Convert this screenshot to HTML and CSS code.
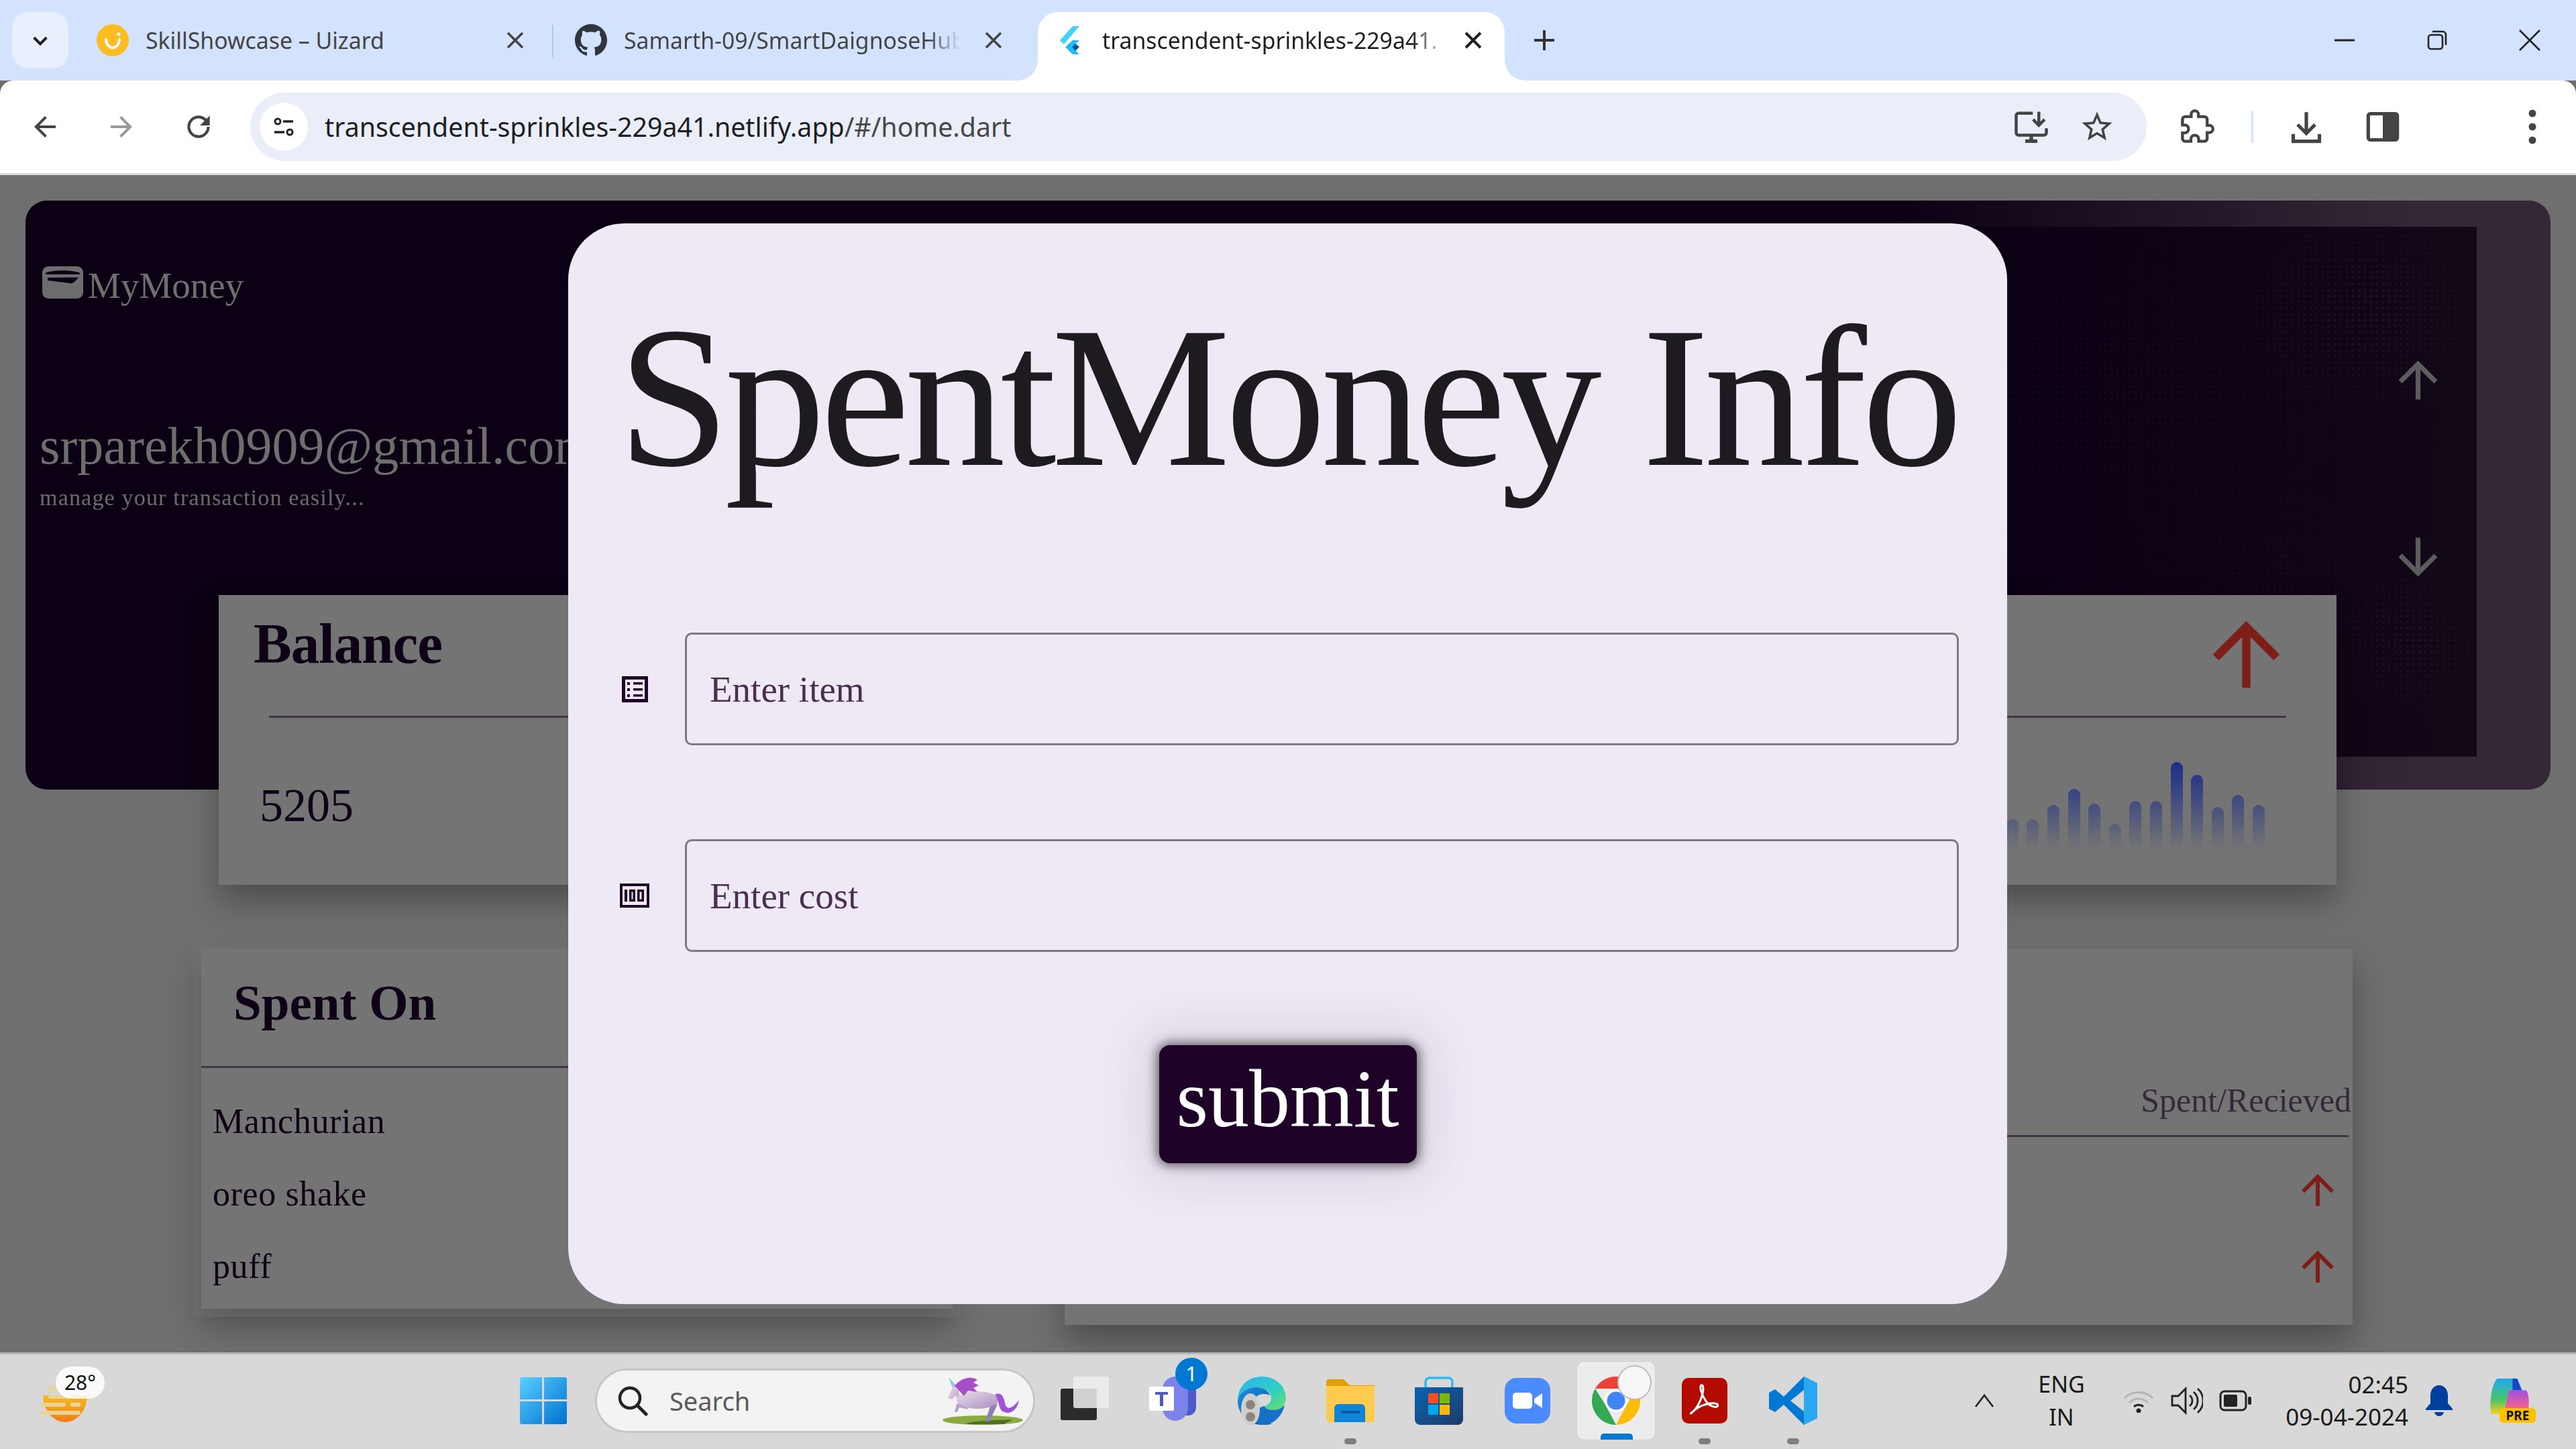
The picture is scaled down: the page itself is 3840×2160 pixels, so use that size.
FILE: index.html
```html
<!DOCTYPE html>
<html lang="en">
<head>
<meta charset="utf-8">
<title>transcendent-sprinkles-229a41</title>
<link rel="stylesheet" href="styles.css">
</head>
<body>
<div class="screen">
  <header class="tabstrip">
    <div class="tabsearch"><svg viewBox="0 0 24 24" class="ic24"><path d="M5 9l7 7 7-7" fill="none" stroke="#1f1f1f" stroke-width="3"/></svg></div>
    <div class="tab tab-first">
      <svg class="favicon" viewBox="0 0 48 48"><circle cx="24" cy="24" r="24" fill="#fdbd22"/><path d="M14 23c1 16 19 16 20 0" fill="none" stroke="#fff" stroke-width="4" stroke-linecap="round"/><circle cx="33" cy="15" r="2.5" fill="#fff"/></svg>
      <span class="tab-title">SkillShowcase – Uizard</span>
      <svg class="tab-close" viewBox="0 0 48 48"><path d="M13 13l22 22M35 13L13 35" stroke="#444" stroke-width="3.5"/></svg>
    </div>
    <div class="tab-sep"></div>
    <div class="tab tab-second">
      <svg class="favicon" viewBox="0 0 16 16"><path fill="#2f3640" d="M8 0C3.58 0 0 3.58 0 8c0 3.54 2.29 6.53 5.47 7.59.4.07.55-.17.55-.38 0-.19-.01-.82-.01-1.49-2.01.37-2.53-.49-2.69-.94-.09-.23-.48-.94-.82-1.13-.28-.15-.68-.52-.01-.53.63-.01 1.08.58 1.23.82.72 1.21 1.87.87 2.33.66.07-.52.28-.87.51-1.07-1.78-.2-3.64-.89-3.64-3.95 0-.87.31-1.59.82-2.15-.08-.2-.36-1.02.08-2.12 0 0 .67-.21 2.2.82.64-.18 1.32-.27 2-.27.68 0 1.36.09 2 .27 1.53-1.04 2.2-.82 2.2-.82.44 1.1.16 1.92.08 2.12.51.56.82 1.27.82 2.15 0 3.07-1.87 3.75-3.65 3.95.29.25.54.73.54 1.48 0 1.07-.01 1.93-.01 2.2 0 .21.15.46.55.38A8.013 8.013 0 0016 8c0-4.42-3.58-8-8-8z"/></svg>
      <span class="tab-title tab-fade">Samarth-09/SmartDaignoseHub</span>
      <svg class="tab-close" viewBox="0 0 48 48"><path d="M13 13l22 22M35 13L13 35" stroke="#444" stroke-width="3.5"/></svg>
    </div>
    <div class="tab tab-active">
      <svg class="favicon" viewBox="0 0 48 48"><path d="M20 3L1 24l6 6L30 3z" fill="#44d1fd"/><path d="M20 24L9 34l11 11h10L19 34l11-10z" fill="#1fbcfd"/><path d="M19 34l5-5 6 5-6 6z" fill="#08589c"/></svg>
      <span class="tab-title tab-fade tab-title-active">transcendent-sprinkles-229a41.</span>
      <svg class="tab-close" viewBox="0 0 48 48"><path d="M13 13l22 22M35 13L13 35" stroke="#1f1f1f" stroke-width="4"/></svg>
    </div>
    <svg class="newtab" viewBox="0 0 48 48"><path d="M24 9v30M9 24h30" stroke="#333" stroke-width="4"/></svg>
    <div class="winctl">
      <div class="winbtn"><svg viewBox="0 0 32 32" class="ic32"><path d="M1 16h30" stroke="#222" stroke-width="3"/></svg></div>
      <div class="winbtn"><svg viewBox="0 0 32 32" class="ic32"><rect x="3" y="8" width="21" height="21" rx="4" fill="none" stroke="#222" stroke-width="2.6"/><path d="M9 3h15a5 5 0 015 5v15" fill="none" stroke="#222" stroke-width="2.6"/></svg></div>
      <div class="winbtn"><svg viewBox="0 0 32 32" class="ic32"><path d="M1 1l30 30M31 1L1 31" stroke="#222" stroke-width="2.6"/></svg></div>
    </div>
  </header>

  <nav class="toolbar">
    <svg class="navicon" viewBox="0 0 24 24"><path fill="#444" d="M20 11H7.83l5.59-5.59L12 4l-8 8 8 8 1.41-1.41L7.83 13H20z"/></svg>
    <svg class="navicon navicon-off" viewBox="0 0 24 24"><path fill="#9a9a9a" d="M4 11h12.17l-5.59-5.59L12 4l8 8-8 8-1.41-1.41L16.17 13H4z"/></svg>
    <svg class="navicon" viewBox="0 0 24 24"><path fill="#444" d="M17.65 6.35A7.96 7.96 0 0012 4a8 8 0 108 8h-2a6 6 0 11-1.76-4.24L13 11h7V4z"/></svg>
    <div class="omnibox">
      <div class="siteinfo"><svg viewBox="0 0 36 36" class="ic36"><circle cx="9" cy="10" r="4" fill="none" stroke="#222" stroke-width="3"/><path d="M17 10h15M4 26h15" stroke="#222" stroke-width="3.4"/><circle cx="27" cy="26" r="4" fill="none" stroke="#222" stroke-width="3"/></svg></div>
      <span class="url">transcendent-sprinkles-229a41.netlify.app<span class="url-dim">/#/home.dart</span></span>
      <svg class="omni-ic" viewBox="0 0 24 24"><path d="M13 3H3.5A1.5 1.5 0 002 4.500V16a1.500 1.500 0 001.500 1.500h17A1.500 1.500 0 0022 16v-3" fill="none" stroke="#444" stroke-width="2"/><path d="M8 21.500h8M12 18v3" stroke="#444" stroke-width="2.400"/><path d="M17 2v9m-3.800-3.800L17 11l3.800-3.800" fill="none" stroke="#444" stroke-width="2"/></svg>
      <svg class="omni-ic" viewBox="0 0 24 24"><path fill="#444" d="M22 9.240l-7.190-.620L12 2 9.190 8.630 2 9.240l5.460 4.730L5.820 21 12 17.270 18.180 21l-1.630-7.030L22 9.240zM12 15.400l-3.760 2.270 1-4.280-3.320-2.880 4.380-.380L12 6.100l1.710 4.040 4.380.380-3.320 2.880 1 4.280L12 15.400z"/></svg>
    </div>
    <svg class="tool-ic tool-ext" viewBox="0 0 24 24"><path fill="none" stroke="#444" stroke-width="2" d="M20.500 11H19V7c0-1.100-.900-2-2-2h-4V3.500C13 2.120 11.880 1 10.500 1S8 2.120 8 3.500V5H4c-1.100 0-1.990.900-1.990 2v3.800H3.500c1.490 0 2.700 1.210 2.700 2.700s-1.210 2.700-2.700 2.700H2V20c0 1.100.900 2 2 2h3.800v-1.500c0-1.490 1.210-2.700 2.700-2.700 1.490 0 2.700 1.210 2.700 2.700V22H17c1.100 0 2-.900 2-2v-4h1.500c1.380 0 2.500-1.120 2.500-2.500S21.880 11 20.500 11z"/></svg>
    <div class="tool-sep"></div>
    <svg class="tool-ic tool-dl" viewBox="0 0 24 24"><path d="M12 2v14M6 10.500l6 6 6-6M3 17v5h18v-5" fill="none" stroke="#444" stroke-width="2.400"/></svg>
    <svg class="tool-ic tool-side" viewBox="0 0 24 24"><rect x="2" y="3" width="20" height="18" rx="1.500" fill="none" stroke="#444" stroke-width="2.400"/><rect x="12" y="3" width="10" height="18" fill="#444"/></svg>
    <svg class="tool-ic tool-menu" viewBox="0 0 24 24"><circle cx="12" cy="4" r="2.200" fill="#444"/><circle cx="12" cy="12" r="2.200" fill="#444"/><circle cx="12" cy="20" r="2.200" fill="#444"/></svg>
  </nav>

  <main class="page">
    <section class="hero">
      <div class="hero-copy">
        <div class="brand">
          <svg class="brand-ic" viewBox="0 0 61 48"><rect width="61" height="48" rx="9" fill="#6d6d6d"/><path d="M5 10c10-5 41-5 51 0v2H5z" fill="#0c0014"/><path d="M8 17l46-.500c-3 4-7 8-10 9L8 21z" fill="#0c0014"/></svg>
          <span class="brand-name">MyMoney</span>
        </div>
        <div class="email">srparekh0909@gmail.com</div>
        <div class="tagline">manage your transaction easily...</div>
      </div>
      <div class="hero-art">
        <div class="dots"></div>
        <svg class="hero-arrow" viewBox="0 0 24 24"><path fill="#5c5c5c" d="M4 12l1.410 1.410L11 7.830V20h2V7.830l5.580 5.590L20 12l-8-8-8 8z"/></svg>
        <svg class="hero-arrow" viewBox="0 0 24 24"><path fill="#5c5c5c" d="M20 12l-1.410-1.410L13 16.170V4h-2v12.170l-5.580-5.590L4 12l8 8 8-8z"/></svg>
      </div>
    </section>

    <section class="balance card">
      <div class="balance-head">
        <h2 class="balance-title">Balance</h2>
        <svg class="big-arrow" viewBox="0 0 24 24"><path fill="#7c1f18" d="M4 12l1.410 1.410L11 7.830V20h2V7.830l5.580 5.590L20 12l-8-8-8 8z"/></svg>
      </div>
      <div class="rule balance-rule"></div>
      <div class="balance-body">
        <div class="balance-value">5205</div>
        <div class="chart">
          <i class="bar" style="height:44px"></i><i class="bar" style="height:44px"></i><i class="bar" style="height:65px"></i><i class="bar" style="height:89px"></i><i class="bar" style="height:67px"></i><i class="bar" style="height:37px"></i><i class="bar" style="height:71px"></i><i class="bar" style="height:71px"></i><i class="bar" style="height:129px"></i><i class="bar" style="height:110px"></i><i class="bar" style="height:62px"></i><i class="bar" style="height:80px"></i><i class="bar" style="height:65px"></i>
        </div>
      </div>
    </section>

    <div class="lists">
      <section class="spent card">
        <h2 class="spent-title">Spent On</h2>
        <div class="rule spent-rule"></div>
        <ul class="items">
          <li>Manchurian</li>
          <li>oreo shake</li>
          <li>puff</li>
        </ul>
      </section>
      <section class="flow card">
        <div class="flow-head">Spent/Recieved</div>
        <div class="rule flow-rule"></div>
        <div class="flow-arrows">
          <svg class="small-arrow" viewBox="0 0 24 24"><path fill="#7c1f18" d="M4 12l1.410 1.410L11 7.830V20h2V7.830l5.580 5.590L20 12l-8-8-8 8z"/></svg>
          <svg class="small-arrow" viewBox="0 0 24 24"><path fill="#7c1f18" d="M4 12l1.410 1.410L11 7.830V20h2V7.830l5.580 5.590L20 12l-8-8-8 8z"/></svg>
        </div>
      </section>
    </div>

    <div class="modal">
      <h1 class="modal-title">SpentMoney Info</h1>
      <div class="field-row">
        <div class="field-ic"><svg class="ic-list" viewBox="0 0 39 39"><path fill="#1e0227" fill-rule="evenodd" d="M1 0h37a1 1 0 011 1v37a1 1 0 01-1 1H1a1 1 0 01-1-1V1a1 1 0 011-1zm4 5v29h29V5z"/><path fill="#1e0227" d="M8 9h4v4H8zM8 18h4v4H8zM8 27h4v4H8zM17 9h14v3.500H17zM17 18h14v3.500H17zM17 27h14v3.500H17z"/></svg></div>
        <div class="field">Enter item</div>
      </div>
      <div class="field-row field-row-next">
        <div class="field-ic"><svg class="ic-money" viewBox="0 0 44 36"><path fill="#1e0227" fill-rule="evenodd" d="M0 0h44v36H0zm4 4v28h36V4z"/><path fill="#1e0227" fill-rule="evenodd" d="M7 9h4v18H7zM14 9h9v18h-9zm3.500 3.500v11h2v-11zM26 9h10v18H26zm3.500 3.500v11h3v-11z"/></svg></div>
        <div class="field">Enter cost</div>
      </div>
      <div class="submit">submit</div>
    </div>
  </main>

  <footer class="taskbar">
    <div class="weather">
      <svg class="weather-ic" viewBox="0 0 80 76"><defs><linearGradient id="sun" x1="0" y1="0" x2="0" y2="1"><stop offset="0" stop-color="#f9b928"/><stop offset="1" stop-color="#f07d12"/></linearGradient></defs><path d="M8 30h66a33 40 0 01-66 0z" fill="url(#sun)"/><g fill="#e8d596"><rect x="16" y="17" width="16" height="6" rx="2"/><rect x="16" y="29" width="33" height="6" rx="2"/><rect x="4" y="41" width="38" height="6" rx="3"/><rect x="49" y="41" width="15" height="6" rx="2"/><rect x="4" y="53" width="60" height="6" rx="3"/></g></svg>
      <span class="temp">28°</span>
    </div>
    <div class="tile tile-win">
      <svg class="ic-win" viewBox="0 0 70 70"><defs><linearGradient id="win" x1="0" y1="0" x2="1" y2="1"><stop offset="0" stop-color="#5ad0ff"/><stop offset="1" stop-color="#0070d0"/></linearGradient></defs><path fill="url(#win)" d="M3 0h30v33H0V3a3 3 0 013-3zM36 0h31a3 3 0 013 3v30H36zM0 36h33v34H3a3 3 0 01-3-3zM36 36h34v31a3 3 0 01-3 3H36z"/></svg>
    </div>
    <div class="searchbox">
      <svg class="ic-search" viewBox="0 0 46 46"><circle cx="19" cy="19" r="15" fill="none" stroke="#222" stroke-width="4.500"/><path d="M30 30l13 13" stroke="#222" stroke-width="5" stroke-linecap="round"/></svg>
      <span class="search-label">Search</span>
      <svg class="ic-unicorn" viewBox="0 0 128 74"><defs><linearGradient id="uni" x1="0" y1="0" x2="1" y2="1"><stop offset="0" stop-color="#ecdde8"/><stop offset="1" stop-color="#a98fc4"/></linearGradient></defs><ellipse cx="66" cy="66" rx="60" ry="7" fill="#8aab3f"/><path d="M40 71c20-5 50-5 70-6l-12 7H46z" fill="#4f6d25"/><path d="M15 2l6 17 6-4z" fill="#8ecbe0"/><path d="M78 42L70 68h6l12-26z" fill="#8f7fb8"/><path d="M40 42H27l-3 12h4l3-7 13 3z" fill="#b6a2cc"/><path d="M36 42c-3-6-5-12-6-20l-8-7-8 18 6 2 6-6 4 14z" fill="url(#uni)"/><ellipse cx="58" cy="36" rx="31" ry="13" fill="url(#uni)"/><path d="M84 28c12-6 14 8 16 16 4 8 12 2 20-8-2 14-12 22-22 18-10-4-6-16-14-26z" fill="#9d54d6"/><path d="M24 15C34 2 50 0 58 6l-6 4 8 4-8 4 6 6-14-2-6 8z" fill="#a64fc9"/></svg>
    </div>
    <div class="tile">
      <svg class="ic-72" viewBox="0 0 72 72"><rect x="0" y="18" width="54" height="47" rx="3" fill="#2b2b2b"/><rect x="19" y="0" width="53" height="47" rx="3" fill="#efefef" fill-opacity=".85"/></svg>
    </div>
    <div class="tile">
      <svg class="ic-teams" viewBox="0 0 96 72"><rect x="45" y="8" width="37" height="50" rx="12" fill="#5059c9"/><rect x="32" y="0" width="38" height="66" rx="19" fill="#7b83eb"/><rect x="12" y="15" width="37" height="36" rx="2" fill="#fff"/><path d="M21 23h19v4h-7v17h-5V27h-7z" fill="#5059c9"/></svg>
      <span class="badge">1</span>
    </div>
    <div class="tile">
      <svg class="ic-72" viewBox="0 0 72 72"><defs><linearGradient id="edge1" x1="0" y1="0" x2="1" y2="1"><stop offset="0" stop-color="#2fb0f0"/><stop offset=".6" stop-color="#2fd0c0"/><stop offset="1" stop-color="#6fe060"/></linearGradient><linearGradient id="edge2" x1="0" y1="0" x2="1" y2="1"><stop offset="0" stop-color="#1a90e0"/><stop offset="1" stop-color="#0b4fa0"/></linearGradient></defs><path d="M0 36C0 14 16 0 36 0c22 0 36 16 36 32 0 10-8 18-20 18-6 0-12-3-12-6 6-2 10-6 10-12 0-8-8-16-22-16C14 16 2 24 0 36z" fill="url(#edge1)"/><path d="M0 36c2-12 14-20 28-20 10 0 18 5 20 12-14-6-26 2-26 16 0 14 12 26 26 26 2 0 4 0 6-1-6 3-12 3-18 3C16 72 0 56 0 36z" fill="url(#edge2)"/><path d="M40 44c0 3 6 6 12 6 8 0 14-3 18-8-3 16-16 30-32 30-8 0-14-6-14-14 0-6 6-12 16-14z" fill="#1670c8"/><ellipse cx="19" cy="49" rx="14" ry="24" fill="#cfcfcf"/><circle cx="19" cy="42" r="7" fill="#8a8580"/><circle cx="19" cy="60" r="7" fill="#8a8580"/></svg>
    </div>
    <div class="tile tile-dot">
      <svg class="ic-72" viewBox="0 0 72 64"><path d="M0 4a4 4 0 014-4h22l9 9h37v10H0z" fill="#e0a000"/><path d="M0 10h72v50a4 4 0 01-4 4H4a4 4 0 01-4-4z" fill="#ffcb4f"/><path d="M12 64V43a6 6 0 016-6h34a6 6 0 016 6v21z" fill="#0f85d8"/><path d="M22 47h28v4H22z" fill="#0a5aa0"/></svg>
    </div>
    <div class="tile">
      <svg class="ic-72" viewBox="0 0 72 72"><defs><linearGradient id="store" x1="0" y1="0" x2="1" y2="1"><stop offset="0" stop-color="#0a64b0"/><stop offset="1" stop-color="#203a6a"/></linearGradient></defs><path d="M16 20V8a6 6 0 016-6h28a6 6 0 016 6v12" fill="none" stroke="#30b8f0" stroke-width="3.500"/><path d="M0 16h72v48a8 8 0 01-8 8H8a8 8 0 01-8-8z" fill="url(#store)"/><rect x="20" y="25" width="15" height="15" fill="#f25022"/><rect x="37" y="25" width="15" height="15" fill="#7fba00"/><rect x="20" y="42" width="15" height="15" fill="#00a4ef"/><rect x="37" y="42" width="15" height="15" fill="#ffb900"/></svg>
    </div>
    <div class="tile">
      <svg class="ic-68" viewBox="0 0 68 68"><rect width="68" height="68" rx="18" fill="#4a8cff"/><rect x="12" y="22" width="29" height="24" rx="5" fill="#fff"/><path d="M44 31l12-8v22l-12-8z" fill="#fff"/></svg>
    </div>
    <div class="tile tile-active">
      <svg class="ic-72" viewBox="0 0 72 72"><path d="M4.800 18A36 36 0 0167.200 18H36z" fill="#ea4335"/><path d="M67.200 18A36 36 0 0136 72L52 42z" fill="#fbbc05"/><path d="M36 72A36 36 0 014.800 18L20 42z" fill="#34a853"/><circle cx="36" cy="36" r="17" fill="#fff"/><circle cx="36" cy="36" r="13.500" fill="#4285f4"/></svg>
      <span class="chrome-dot"></span>
      <span class="active-bar"></span>
    </div>
    <div class="tile tile-dot">
      <svg class="ic-68" viewBox="0 0 68 68"><rect width="68" height="68" rx="10" fill="#b30b00"/><path d="M14 52c8-4 16-20 18-34 0-6-1-8-3-7-3 2 0 14 8 25 4 5 10 8 15 7 3-1 2-5-3-5-10-1-24 4-32 12-3 3-4 4-3 2z" fill="none" stroke="#fff" stroke-width="3"/></svg>
    </div>
    <div class="tile tile-dot">
      <svg class="ic-72" viewBox="0 0 72 72"><path fill="#0078d4" fill-rule="evenodd" d="M52 0l20 10v52L52 72 22 42 9 53l-9-5V24l9-5 13 11zM52 20L32 36l20 16z"/><path fill="#2aa8f2" d="M52 0l20 10v52L52 72V52L52 20z"/></svg>
    </div>
    <div class="tray">
      <svg class="ic-chevron" viewBox="0 0 32 24"><path d="M3 21L16 4l13 17" fill="none" stroke="#222" stroke-width="2.600"/></svg>
      <div class="lang"><span>ENG</span><span>IN</span></div>
      <svg class="ic-wifi" viewBox="0 0 48 36"><path d="M3 14a30 30 0 0142 0M10 21a20 20 0 0128 0" fill="none" stroke="#b4b4b4" stroke-width="3"/><path d="M17 27a10 10 0 0114 0" fill="none" stroke="#222" stroke-width="3"/><circle cx="24" cy="33" r="3.500" fill="#222"/></svg>
      <svg class="ic-speaker" viewBox="0 0 48 42"><path d="M2 14h9L22 3v36L11 28H2z" fill="none" stroke="#222" stroke-width="2.800"/><path d="M28 13a10 10 0 010 16M34 8a17 17 0 010 26M40 3a24 24 0 010 36" fill="none" stroke="#222" stroke-width="2.800"/></svg>
      <svg class="ic-battery" viewBox="0 0 48 32"><rect x="2" y="2" width="38" height="28" rx="6" fill="none" stroke="#222" stroke-width="3"/><rect x="7" y="7" width="20" height="18" rx="2" fill="#222"/><rect x="43" y="10" width="5" height="12" rx="2" fill="#222"/></svg>
      <div class="clock"><span>02:45</span><span>09-04-2024</span></div>
      <svg class="ic-bell" viewBox="0 0 40 46"><path d="M20 0c8 0 13 7 13 15v12l7 8v2H0v-2l7-8V15C7 7 12 0 20 0z" fill="#003f9b"/><path d="M13 40h14c-1 4-4 6-7 6s-6-2-7-6z" fill="#003f9b"/></svg>
      <div class="copilot">
        <svg class="ic-copilot" viewBox="0 0 70 66"><defs><linearGradient id="cop1" x1="0" y1="0" x2="0" y2="1"><stop offset="0" stop-color="#20a8f0"/><stop offset=".6" stop-color="#4cc46a"/><stop offset="1" stop-color="#f2d020"/></linearGradient><linearGradient id="cop2" x1="0" y1="0" x2="0" y2="1"><stop offset="0" stop-color="#a050e0"/><stop offset=".6" stop-color="#f06090"/><stop offset="1" stop-color="#fa9030"/></linearGradient></defs><path d="M14 0h34l6 20H34l-8 40H4c-4-16 0-50 10-60z" fill="url(#cop1)"/><path d="M40 0h8l8 20H40z" fill="#1846c8"/><path d="M34 20h28c6 0 8 30 2 46H24z" fill="url(#cop2)"/></svg>
        <span class="pre">PRE</span>
      </div>
    </div>
  </footer>
</div>
</body>
</html>
```

FILE: styles.css
```css
* { box-sizing: border-box; }
html, body { margin: 0; padding: 0; }
body { width: 3840px; height: 2160px; overflow: hidden; font-family: "Noto Sans", "Open Sans", sans-serif; background: #707070; }
h1, h2, ul { margin: 0; padding: 0; font-weight: inherit; }
li { list-style: none; }
svg { display: block; flex: none; }

.screen { width: 3840px; height: 2160px; display: flex; flex-direction: column; }

/* ---- tab strip ---- */
.tabstrip { height: 120px; flex: none; background: #d3e3fd; display: flex; align-items: flex-end; padding-left: 18px; position: relative; }
.tabsearch { width: 84px; height: 84px; margin: 0 10px 18px 0; background: #e9f0fd; border-radius: 24px; display: flex; align-items: center; justify-content: center; }
.ic24 { width: 32px; height: 32px; }
.tab { width: 712px; height: 102px; padding: 0 32px 18px; display: flex; align-items: center; gap: 25px; }
.tab-sep { width: 2px; height: 48px; background: #a8c7fa; margin-bottom: 35px; flex: none; margin-left: -1px; }
.favicon { width: 48px; height: 48px; }
.tab-title { flex: 1; min-width: 0; font-size: 33.800px; color: #444; white-space: nowrap; overflow: hidden; }
.tab-fade { -webkit-mask-image: linear-gradient(90deg, #000 90%, transparent 100%); mask-image: linear-gradient(90deg, #000 90%, transparent 100%); }
.tab-title-active { color: #1f1f1f; }
.tab-close { width: 48px; height: 48px; }
.tab-active { width: 696px; margin-left: 10px; gap: 16px; padding-right: 23px; background: #fff; border-radius: 30px 30px 0 0; position: relative; }
.tab-active::before, .tab-active::after { content: ""; position: absolute; bottom: 0; width: 30px; height: 30px; }
.tab-active::before { left: -30px; background: radial-gradient(circle at 0 0, transparent 29.5px, #fff 30px); }
.tab-active::after { right: -30px; background: radial-gradient(circle at 100% 0, transparent 29.5px, #fff 30px); }
.newtab { width: 48px; height: 48px; margin: 0 0 36px 35px; }
.winctl { margin-left: auto; display: flex; height: 120px; }
.winbtn { width: 138px; height: 120px; display: flex; align-items: center; justify-content: center; }
.ic32 { width: 32px; height: 32px; }

/* ---- toolbar ---- */
.toolbar { height: 141px; flex: none; background: #fff; border-bottom: 3px solid #dcdcd8; border-radius: 20px 20px 0 0; display: flex; align-items: center; padding-left: 43px; }
.navicon { width: 48px; height: 48px; margin-right: 66px; }
.navicon:nth-child(3) { margin-right: 52px; width: 50px; height: 50px; }
.omnibox { width: 2827px; height: 102px; background: #e9eef8; border-radius: 51px; display: flex; align-items: center; padding-left: 14px; flex: none; }
.siteinfo { width: 72px; height: 72px; border-radius: 50%; background: #fff; display: flex; align-items: center; justify-content: center; }
.ic36 { width: 36px; height: 36px; }
.url { font-size: 39.300px; color: #1f1f1f; margin-left: 25px; flex: 1; white-space: nowrap; }
.url-dim { color: #474747; }
.omni-ic { width: 54px; height: 54px; margin-right: 44px; }
.omni-ic:last-child { margin-right: 47px; }
.tool-ic { width: 52px; height: 52px; }
.tool-ext { margin-left: 49px; }
.tool-sep { width: 3px; height: 48px; background: #d3e3fd; margin-left: 55px; }
.tool-dl { margin-left: 53px; }
.tool-side { margin-left: 62px; }
.tool-menu { margin-left: 167px; width: 60px; height: 60px; }

/* ---- page ---- */
.page { flex: 1; min-height: 0; position: relative; overflow: hidden; background: #6f6f6f; padding-top: 38px; }

.hero { height: 878px; margin: 0 38px; border-radius: 32px; display: flex; justify-content: space-between; background: linear-gradient(90deg, #0c0014 74%, #352836 95%); font-family: "Liberation Serif", serif; }
.hero-copy { padding: 97px 0 0 21px; white-space: nowrap; }
.brand { display: flex; gap: 7px; margin-left: 4px; height: 60px; }
.brand-ic { width: 61px; height: 48px; margin-top: 1px; }
.brand-name { font-size: 55px; line-height: 60px; color: #6f6f6f; }
.email { margin-top: 164px; font-size: 78px; line-height: 90px; color: #6e6e6e; }
.tagline { margin-top: 12px; font-size: 34px; line-height: 40px; letter-spacing: 1.190px; color: #6a6a6a; }
.hero-art { width: 1692px; margin: 39px 110px 49px 0; padding: 185px 44px 0 0; background: linear-gradient(90deg, #0c0014 60%, #120816); display: flex; flex-direction: column; align-items: flex-end; gap: 177px; position: relative; }
.dots { position: absolute; inset: 0; background-image: radial-gradient(circle, #211727 1.600px, transparent 2.200px); background-size: 9px 9px; -webkit-mask-image: radial-gradient(ellipse 220px 170px at 1540px 120px, rgba(0,0,0,.85), transparent), radial-gradient(ellipse 130px 130px at 1600px 620px, rgba(0,0,0,.85), transparent), radial-gradient(ellipse 500px 340px at 1160px 240px, rgba(0,0,0,.35), transparent), radial-gradient(ellipse 220px 160px at 1400px 540px, rgba(0,0,0,.35), transparent); mask-image: radial-gradient(ellipse 220px 170px at 1540px 120px, rgba(0,0,0,.85), transparent), radial-gradient(ellipse 130px 130px at 1600px 620px, rgba(0,0,0,.85), transparent), radial-gradient(ellipse 500px 340px at 1160px 240px, rgba(0,0,0,.35), transparent), radial-gradient(ellipse 220px 160px at 1400px 540px, rgba(0,0,0,.35), transparent); }
.hero-arrow { width: 87px; height: 87px; position: relative; }

.card { background: #747474; font-family: "Liberation Serif", serif; color: #0f0116; position: relative; box-shadow: 0 24px 44px rgba(0, 0, 0, .3); }
.rule { height: 3px; background: #3e3845; }

.balance { width: 3157px; height: 432px; margin: -290px 0 0 326px; }
.balance-head { height: 180px; padding: 14px 60px 0 52px; display: flex; justify-content: space-between; align-items: flex-start; }
.balance-title { margin-top: 8px; font-size: 85px; line-height: 100px; font-weight: 700; letter-spacing: -1px; }
.big-arrow { width: 149px; height: 149px; }
.balance-rule { margin: 0 75px; }
.balance-body { display: flex; justify-content: space-between; align-items: flex-start; padding: 0 107px 0 61px; }
.balance-value { margin-top: 91px; font-size: 70px; line-height: 80px; }
.chart { margin-top: 66px; height: 129px; display: flex; align-items: flex-end; gap: 12.600px; -webkit-mask-image: linear-gradient(180deg, #000, transparent); mask-image: linear-gradient(180deg, #000, transparent); }
.bar { width: 18px; background: #1c2d88; border-radius: 9px 9px 0 0; display: block; }

.lists { display: flex; align-items: flex-start; gap: 167px; margin: 95px 0 0 300px; }
.spent { width: 1120px; height: 537px; padding-top: 36px; box-shadow: 0 0 0 12px rgba(116, 116, 116, .4), 0 24px 44px rgba(0, 0, 0, .3); }
.spent-title { margin-left: 48px; font-size: 75px; line-height: 90px; font-weight: 700; }
.spent-rule { margin-top: 49px; }
.items { margin-top: 26px; padding-left: 17px; font-size: 52px; line-height: 108px; letter-spacing: .6px; }
.flow { width: 1920px; height: 561px; padding-top: 196px; }
.flow-head { text-align: right; padding-right: 2px; font-size: 50px; line-height: 60px; color: #35293a; }
.flow-rule { margin: 22px 6px 0 0; }
.flow-arrows { display: flex; flex-direction: column; align-items: flex-end; gap: 42px; margin: 43px 16px 0 0; }
.small-arrow { width: 72px; height: 72px; }

/* ---- dialog ---- */
.modal { position: absolute; left: 847px; top: 72px; width: 2145px; height: 1611px; background: #efe9f6; border-radius: 84px; padding-top: 89px; display: flex; flex-direction: column; font-family: "Liberation Serif", serif; }
.modal-title { text-align: center; font-size: 300px; line-height: 340px; letter-spacing: -7.400px; color: #1d1b20; white-space: nowrap; }
.field-row { margin-top: 181px; padding: 0 72px 0 55px; display: flex; align-items: center; gap: 31px; }
.field-row-next { margin-top: 140px; }
.field-ic { width: 88px; display: flex; justify-content: center; }
.ic-list { width: 39px; height: 39px; }
.ic-money { width: 44px; height: 36px; }
.field { flex: 1; height: 168px; border: 3px solid #7f7887; border-radius: 10px; padding-left: 34px; display: flex; align-items: center; font-size: 55px; color: #49304f; }
.submit { align-self: center; margin-top: 139px; width: 384px; height: 176px; padding-bottom: 16px; border-radius: 16px; background: #1e0227; color: #fff; font-size: 122px; display: flex; align-items: center; justify-content: center; box-shadow: 0 0 16px 4px rgba(30, 25, 35, .62), 0 0 70px 24px rgba(30, 25, 35, .1); }

/* ---- taskbar ---- */
.taskbar { height: 144px; flex: none; border-top: 3px solid #b8b8b8; background: #d8d8d8; display: flex; align-items: center; padding: 0 0 3px 56px; font-family: "Noto Sans", "Open Sans", sans-serif; color: #1a1a1a; }
.weather { width: 100px; height: 76px; position: relative; }
.weather-ic { width: 80px; height: 76px; }
.temp { position: absolute; left: 27px; top: -13px; width: 73px; height: 48px; border-radius: 24px; background: rgba(255, 255, 255, .85); font-size: 30px; line-height: 48px; text-align: center; color: #111; }
.tile { width: 116px; height: 116px; margin-right: 16px; border-radius: 10px; position: relative; display: flex; align-items: center; justify-content: center; flex: none; }
.tile-win { margin: 0 19px 0 596px; }
.ic-win { width: 70px; height: 70px; }
.searchbox { width: 656px; height: 96px; margin-right: 16px; border: 3px solid #c6c6c6; border-radius: 48px; background: #f3f3f3; display: flex; align-items: center; padding: 0 13px 0 30px; flex: none; }
.ic-search { width: 46px; height: 46px; }
.search-label { font-size: 38px; color: #5a5a5a; margin-left: 32px; flex: 1; }
.ic-unicorn { width: 128px; height: 74px; }
.ic-72 { width: 72px; height: 72px; }
.ic-68 { width: 68px; height: 68px; }
.ic-teams { width: 96px; height: 72px; }
.badge { position: absolute; left: 61px; top: -6px; width: 48px; height: 48px; border-radius: 50%; background: #0078d4; color: #fff; font-size: 30px; line-height: 48px; text-align: center; }
.tile-dot::after { content: ""; position: absolute; left: 50%; bottom: -7px; width: 18px; height: 9px; margin-left: -9px; border-radius: 5px; background: #7f7f7f; }
.tile-active { background: #ececec; box-shadow: 0 0 0 1px #cfcfcf; }
.chrome-dot { position: absolute; left: 62px; top: 7px; width: 47px; height: 48px; border-radius: 50%; background: #f7f7f7; box-shadow: 0 0 0 2px #bdbdbd; }
.active-bar { position: absolute; left: 35px; bottom: 0; width: 48px; height: 9px; border-radius: 5px 5px 0 0; background: #0078d4; }
.tray { margin-left: auto; display: flex; align-items: center; padding-right: 60px; flex: none; }
.ic-chevron { width: 32px; height: 24px; margin-right: 55px; }
.lang { width: 88px; display: flex; flex-direction: column; align-items: center; font-size: 34px; line-height: 49px; margin-right: 47px; }
.ic-wifi { width: 48px; height: 36px; margin-right: 24px; }
.ic-speaker { width: 48px; height: 42px; margin-right: 24px; }
.ic-battery { width: 48px; height: 32px; }
.clock { width: 234px; display: flex; flex-direction: column; align-items: flex-end; font-size: 35px; line-height: 48px; margin-right: 26px; }
.ic-bell { width: 40px; height: 46px; margin-right: 54px; }
.copilot { width: 70px; height: 66px; position: relative; }
.ic-copilot { width: 62px; height: 58px; }
.pre { position: absolute; right: 0; bottom: 0; width: 54px; height: 22px; border-radius: 5px; background: #ffc000; color: #111; font-size: 19px; line-height: 22px; font-weight: 700; text-align: center; }
```
